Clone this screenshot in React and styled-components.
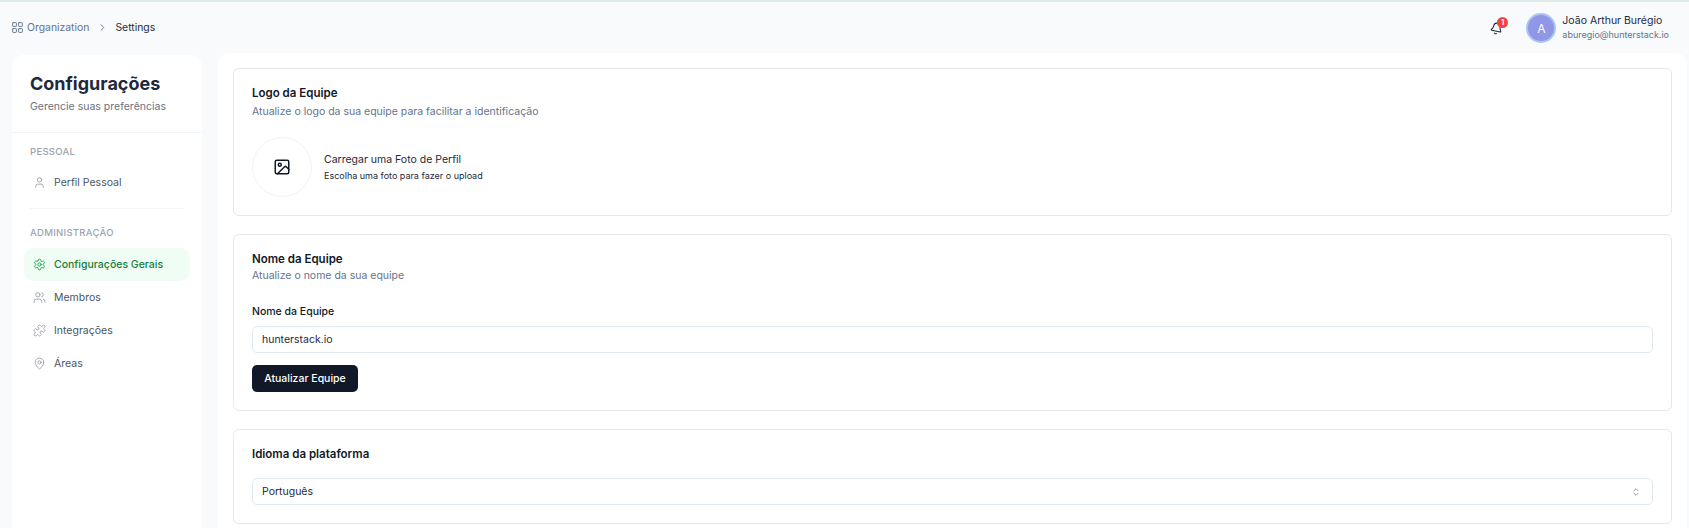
import React from 'react'
import styled, { createGlobalStyle } from 'styled-components'
import { Bell, ChevronRight, ChevronsUpDown, Image, LayoutGrid, MapPin, Puzzle, Settings, User, Users } from 'lucide-react'

const Global = createGlobalStyle`
  html, body { margin: 0; padding: 0; background: #f8fafc; }
  body { font-family: Inter, "Liberation Sans", sans-serif; color: #111827; overflow: hidden; }
  * { box-sizing: border-box; }
`

const Page = styled.div`
  height: 528px;
  overflow: hidden;
  border-top: 2px solid #dfe9ea;
`
const Header = styled.header`
  height: 51px;
  padding: 0 20px 0 11px;
  display: flex;
  align-items: center;
  justify-content: space-between;
`
const Crumbs = styled.nav`
  display: flex;
  align-items: center;
  font-size: 10.4px;
  color: #64748b;
  margin-top: -1px;
  svg { color: #64748b; }
`
const CrumbLink = styled.span`
  display: flex;
  align-items: center;
  gap: 3px;
`
const CrumbSep = styled.span`
  display: flex;
  margin: 0 7px 0 8px;
  color: #64748b;
`
const CrumbCurrent = styled.span`
  color: #1e293b;
`
const UserArea = styled.div`
  display: flex;
  align-items: center;
  margin-top: 1px;
`
const BellWrap = styled.div`
  position: relative;
  display: flex;
  margin-right: 23px;
  color: #1f2937;
  > svg { transform: rotate(12deg); }
`
const Badge = styled.span`
  position: absolute;
  top: -5px;
  right: -5px;
  width: 11px;
  height: 11px;
  border-radius: 50%;
  background: #ef4444;
  color: #fff;
  font-size: 7px;
  font-weight: 700;
  display: flex;
  align-items: center;
  justify-content: center;
`
const Avatar = styled.div`
  width: 30px;
  height: 30px;
  border-radius: 50%;
  background: #8f97e6;
  border: 2px solid #a9c4f5;
  color: #fff;
  font-size: 12px;
  display: flex;
  align-items: center;
  justify-content: center;
  margin-right: 6px;
`
const UserName = styled.div`
  font-size: 10.5px;
  line-height: 14px;
  color: #1e293b;
`
const UserMail = styled.div`
  font-size: 9px;
  line-height: 14px;
  color: #64748b;
`
const Body = styled.div`
  display: flex;
  align-items: stretch;
  gap: 16px;
  padding: 0 2px 0 12px;
  height: 475px;
`
const Sidebar = styled.aside`
  width: 190px;
  flex: none;
  margin-top: 2px;
  background: #fff;
  border-radius: 12px 12px 0 0;
`
const SideHead = styled.div`
  padding: 17px 18px 18px;
  border-bottom: 1px solid #f3f4f6;
`
const SideTitle = styled.h1`
  margin: 0;
  font-size: 18px;
  line-height: 24px;
  font-weight: 700;
  color: #1e293b;
`
const SideSub = styled.p`
  margin: 4px 0 0;
  font-size: 10.5px;
  line-height: 14px;
  color: #6b7280;
`
const SideSection = styled.section`
  padding: ${p => p.$first ? '12px 12px 9px' : '17px 12px 0'};
`
const SectionLabel = styled.div`
  padding: 0 6px;
  font-size: 9.5px;
  line-height: 14px;
  letter-spacing: 0.3px;
  font-weight: 500;
  color: #9ca3af;
  margin-bottom: ${p => p.$mb}px;
`
const Divider = styled.hr`
  margin: 0 18px;
  border: 0;
  border-top: 1px solid #f3f4f6;
`
const NavItem = styled.div`
  height: 33px;
  display: flex;
  align-items: center;
  gap: 8px;
  padding: 0 8px 0 9px;
  border-radius: 10px;
  font-size: 10.5px;
  color: ${p => p.$active ? '#15803d' : '#4b5563'};
  background: ${p => p.$active ? '#f0fdf4' : 'transparent'};
  font-weight: ${p => p.$active ? 500 : 400};
  svg { color: ${p => p.$active ? '#16a34a' : '#9ca3af'}; flex: none; }
`
const Main = styled.main`
  flex: 1;
  background: #fff;
  border-radius: 12px 12px 0 0;
  padding: 15px 15px 0;
  display: flex;
  flex-direction: column;
  gap: 18px;
`
const Card = styled.section`
  border: 1px solid #e5e7eb;
  border-radius: 6px;
  padding: ${p => p.$top}px 18px 0;
  height: ${p => p.$h}px;
  flex: none;
`
const CardTitle = styled.h2`
  margin: 0;
  font-size: 11.5px;
  line-height: 18px;
  font-weight: 600;
  color: #111827;
`
const CardSub = styled.p`
  margin: ${p => p.$mt}px 0 0;
  font-size: 10.5px;
  line-height: 16px;
  color: #64748b;
`
const UploadRow = styled.div`
  display: flex;
  align-items: center;
  gap: 12px;
  margin-top: 17px;
`
const UploadCircle = styled.div`
  width: 60px;
  height: 60px;
  border-radius: 50%;
  border: 1px solid #f1f3f6;
  display: flex;
  align-items: center;
  justify-content: center;
  color: #111827;
`
const UploadTitle = styled.div`
  font-size: 10.5px;
  line-height: 16px;
  color: #1f2937;
`
const UploadHint = styled.div`
  margin-top: 1px;
  font-size: 9px;
  line-height: 14px;
  color: #1f2937;
`
const FieldLabel = styled.label`
  display: block;
  margin-top: 20px;
  font-size: 10.5px;
  line-height: 16px;
  font-weight: 500;
  color: #111827;
`
const Field = styled.div`
  margin-top: ${p => p.$mt}px;
  height: 27px;
  border: 1px solid #e2e8f0;
  border-radius: 5px;
  padding: 0 9px;
  display: flex;
  align-items: center;
  justify-content: space-between;
  font-size: 10.5px;
  color: #1f2937;
  svg { color: #7c8aa0; margin-right: 2px; }
`
const Button = styled.button`
  display: block;
  margin-top: 12px;
  height: 27px;
  width: 106px;
  padding: 0;
  border: 0;
  border-radius: 5px;
  background: #111827;
  color: #fff;
  font: 500 10.5px Inter, sans-serif;
`

export default function App() {
  return (
    <Page>
      <Global />
      <Header>
        <Crumbs>
          <CrumbLink><LayoutGrid size={13} strokeWidth={1.75} />Organization</CrumbLink>
          <CrumbSep><ChevronRight size={11} /></CrumbSep>
          <CrumbCurrent>Settings</CrumbCurrent>
        </Crumbs>
        <UserArea>
          <BellWrap>
            <Bell size={13} />
            <Badge>1</Badge>
          </BellWrap>
          <Avatar>A</Avatar>
          <div>
            <UserName>João Arthur Burégio</UserName>
            <UserMail>aburegio@hunterstack.io</UserMail>
          </div>
        </UserArea>
      </Header>
      <Body>
        <Sidebar>
          <SideHead>
            <SideTitle>Configurações</SideTitle>
            <SideSub>Gerencie suas preferências</SideSub>
          </SideHead>
          <SideSection $first>
            <SectionLabel $mb={7}>PESSOAL</SectionLabel>
            <NavItem><User size={13} strokeWidth={1.75} />Perfil Pessoal</NavItem>
          </SideSection>
          <Divider />
          <SideSection>
            <SectionLabel $mb={8}>ADMINISTRAÇÃO</SectionLabel>
            <NavItem $active><Settings size={13} strokeWidth={1.75} />Configurações Gerais</NavItem>
            <NavItem><Users size={13} strokeWidth={1.75} />Membros</NavItem>
            <NavItem><Puzzle size={13} strokeWidth={1.75} />Integrações</NavItem>
            <NavItem><MapPin size={13} strokeWidth={1.75} />Áreas</NavItem>
          </SideSection>
        </Sidebar>
        <Main>
          <Card $h={148} $top={15}>
            <CardTitle>Logo da Equipe</CardTitle>
            <CardSub $mt={2}>Atualize o logo da sua equipe para facilitar a identificação</CardSub>
            <UploadRow>
              <UploadCircle><Image size={18} /></UploadCircle>
              <div>
                <UploadTitle>Carregar uma Foto de Perfil</UploadTitle>
                <UploadHint>Escolha uma foto para fazer o upload</UploadHint>
              </div>
            </UploadRow>
          </Card>
          <Card $h={177} $top={15}>
            <CardTitle>Nome da Equipe</CardTitle>
            <CardSub $mt={0}>Atualize o nome da sua equipe</CardSub>
            <FieldLabel>Nome da Equipe</FieldLabel>
            <Field $mt={6}>hunterstack.io</Field>
            <Button>Atualizar Equipe</Button>
          </Card>
          <Card $h={95} $top={15}>
            <CardTitle>Idioma da plataforma</CardTitle>
            <Field $mt={15}>Português<ChevronsUpDown size={10} /></Field>
          </Card>
        </Main>
      </Body>
    </Page>
  )
}
